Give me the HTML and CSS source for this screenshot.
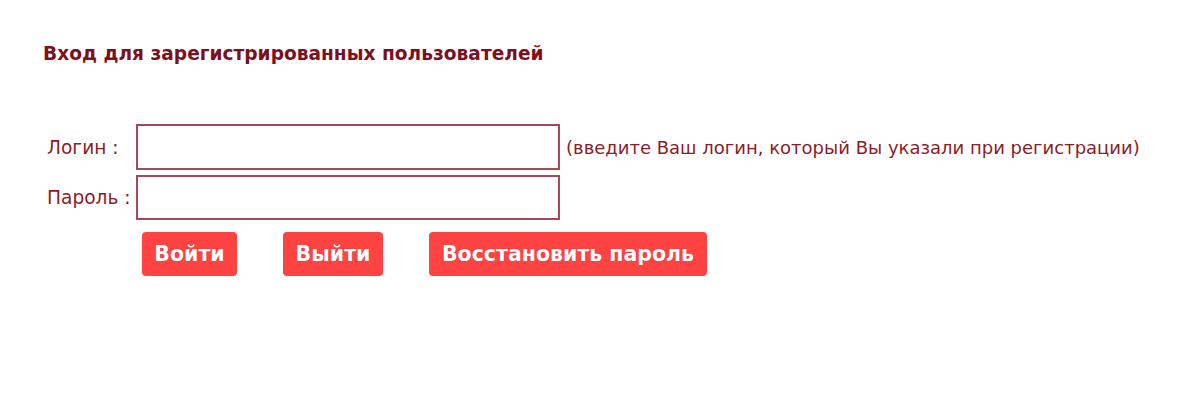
FILE: index.html
```html
<!DOCTYPE html>
<html lang="ru">
<head>
<meta charset="utf-8">
<title>Вход</title>
<link rel="stylesheet" href="styles.css">
</head>
<body>
<div class="page">
  <h1 class="title">Вход для зарегистрированных пользователей</h1>
  <form class="login">
    <label class="lbl lbl-login" for="login">Логин :</label>
    <input class="field" id="login" type="text">
    <span class="hint">(введите Ваш логин, который Вы указали при регистрации)</span>
    <label class="lbl" for="pass">Пароль :</label>
    <input class="field" id="pass" type="password">
    <span></span>
    <div class="actions">
      <button type="button" class="btn btn-in">Войти</button>
      <button type="button" class="btn btn-out">Выйти</button>
      <button type="button" class="btn btn-restore">Восстановить пароль</button>
    </div>
  </form>
</div>
</body>
</html>
```
FILE: styles.css
```css
html, body {
  margin: 0;
  padding: 0;
  background: #ffffff;
}
.page {
  padding: 41px 0 0 43px;
  font-family: "DejaVu Sans", Verdana, sans-serif;
  color: #8b1c28;
}
.title {
  margin: 0;
  font-size: 18.6px;
  font-weight: bold;
  color: #7d1020;
  line-height: 26px;
}
.login {
  margin-top: 57px;
  display: grid;
  grid-template-columns: 93px 424px auto;
  grid-template-rows: 46px 45px auto;
  row-gap: 5px;
  align-items: center;
}
.lbl {
  font-size: 18.6px;
  padding-left: 4px;
  white-space: nowrap;
}
.field {
  box-sizing: border-box;
  width: 424px;
  height: 100%;
  border: 2px solid #a4485a;
  margin: 0;
  padding: 0 6px;
  background: #fff;
  outline: none;
}
.hint {
  font-size: 18px;
  padding-left: 6px;
  white-space: nowrap;
}
.actions {
  grid-column: 2 / 4;
  display: flex;
  gap: 46px;
  margin-top: 7px;
  padding-left: 6px;
}
.btn {
  height: 44px;
  border: none;
  border-radius: 4px;
  background: #ff4343;
  color: #ffffff;
  font-family: "DejaVu Sans", Verdana, sans-serif;
  font-weight: bold;
  font-size: 20.5px;
  padding: 0;
  white-space: nowrap;
  text-shadow: 0 0 1px rgba(120, 0, 0, 0.35);
}
.btn-in { width: 95px; }
.btn-out { width: 100px; }
.btn-restore { width: 278px; }
```
